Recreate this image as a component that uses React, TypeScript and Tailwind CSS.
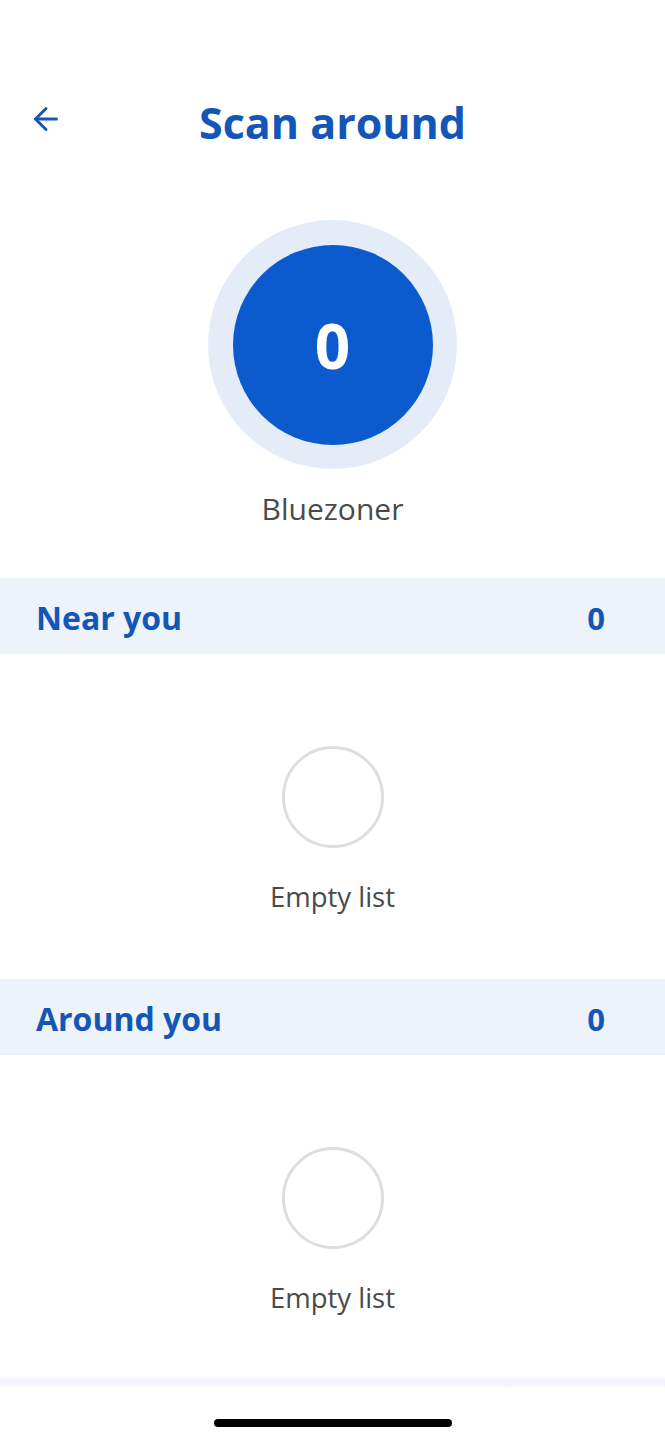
import { ArrowLeft } from 'lucide-react';

const font = { fontFamily: '"Open Sans", "Noto Sans", sans-serif' };

function SectionHeader({ title, count }: { title: string; count: number }) {
  return (
    <div className="h-[76px] bg-[#edf3fa] flex items-center justify-between pl-[36px] pr-[60px] pt-[4px]">
      <span className="text-[32px] font-bold text-[#1456b8] leading-none">{title}</span>
      <span className="text-[31px] font-bold text-[#1456b8] leading-none">{count}</span>
    </div>
  );
}

function EmptyList() {
  return (
    <div className="flex flex-col items-center pt-[92px]">
      <div className="w-[102px] h-[102px] rounded-full border-[3px] border-[#dedede]" />
      <div className="mt-[31px] text-[27.5px] leading-[36px] text-[#4a4a4a]">Empty list</div>
    </div>
  );
}

export default function App() {
  return (
    <div className="w-[665px] h-[1440px] bg-white overflow-hidden flex flex-col" style={font}>
      <div className="mt-[88px] h-[68px] grid grid-cols-[1fr_auto_1fr] items-center">
        <div className="pl-[28px] -mt-[6px]">
          <ArrowLeft size={36} strokeWidth={2} className="text-[#1456b8]" />
        </div>
        <h1 className="text-[43px] font-bold text-[#1456b8] leading-none">Scan around</h1>
        <div />
      </div>

      <div className="mt-[64px] flex flex-col items-center">
        <div className="w-[249px] h-[249px] rounded-full bg-[#e4ecf8] flex items-center justify-center">
          <div className="w-[200px] h-[200px] rounded-full bg-[#0b5bcf] flex items-center justify-center">
            <span className="text-[62px] font-bold text-white leading-none">0</span>
          </div>
        </div>
        <div className="mt-[20px] text-[30px] leading-[40px] text-[#4a4a4a]">Bluezoner</div>
      </div>

      <div className="mt-[49px]">
        <SectionHeader title="Near you" count={0} />
      </div>
      <EmptyList />

      <div className="mt-[64px]">
        <SectionHeader title="Around you" count={0} />
      </div>
      <EmptyList />

      <div className="mt-[60px] h-[12px] bg-gradient-to-b from-[#fbfcfe] via-[#eef2fa] to-[#fbfcfe]" />

      <div className="mt-[31px] flex justify-center">
        <div className="w-[238px] h-[8px] rounded-full bg-black" />
      </div>
    </div>
  );
}
